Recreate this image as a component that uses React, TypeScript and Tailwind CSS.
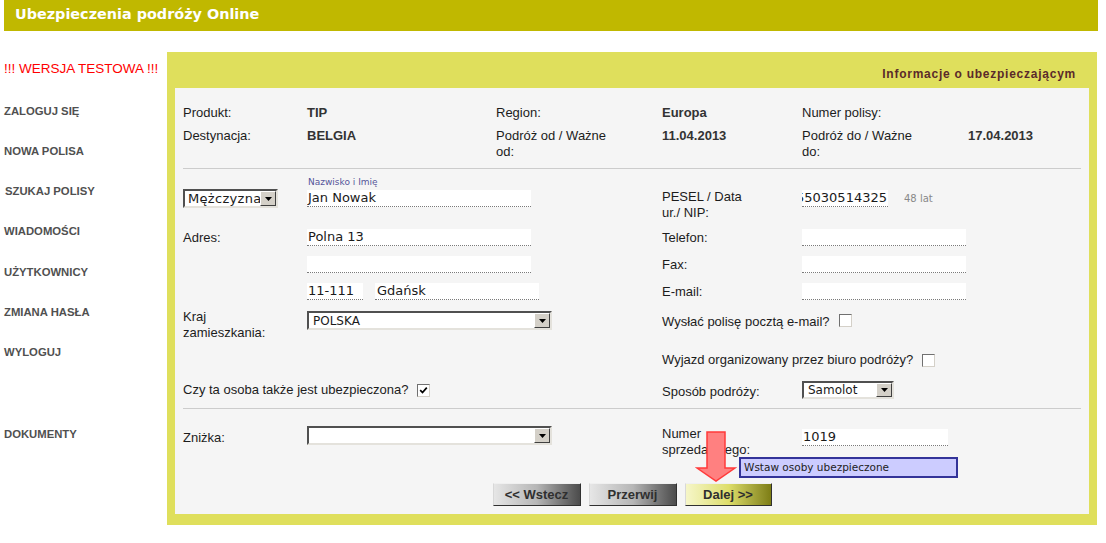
import React from "react";

const arial = "font-['Liberation_Sans',Arial,sans-serif]";
const verdana = "font-['DejaVu_Sans',Verdana,sans-serif]";

const nav = [
  { label: "ZALOGUJ SIĘ", pad: "" },
  { label: "NOWA POLISA", pad: "" },
  { label: "SZUKAJ POLISY", pad: "pl-[1px]" },
  { label: "WIADOMOŚCI", pad: "" },
  { label: "UŻYTKOWNICY", pad: "" },
  { label: "ZMIANA HASŁA", pad: "" },
  { label: "WYLOGUJ", pad: "" },
];

function DownArrow() {
  return (
    <svg width="7" height="4" viewBox="0 0 7 4">
      <path d="M0 0H7L3.5 4Z" fill="#000" />
    </svg>
  );
}

function Select({ value = "", className = "", textClass = "" }: { value?: string; className?: string; textClass?: string }) {
  return (
    <div
      className={`flex bg-white border-2 border-t-[#505050] border-l-[#505050] border-r-[#e4e2dc] border-b-[#e4e2dc] ${className}`}
    >
      <div className={`flex-1 flex items-center overflow-hidden whitespace-nowrap pl-[3px] text-[#1a1a1a] ${verdana} ${textClass}`}>
        {value}
      </div>
      <div className="w-[16px] flex items-center justify-center bg-[#d4d0c8] border border-t-white border-l-white border-r-[#404040] border-b-[#404040]">
        <DownArrow />
      </div>
    </div>
  );
}

function Input({ value = "", className = "", right = false }: { value?: string; className?: string; right?: boolean }) {
  return (
    <div
      className={`h-[17px] flex bg-white border-b border-dotted border-[#7a7a7a] px-[1px] text-[13px] leading-[16px] whitespace-nowrap overflow-hidden text-[#1a1a1a] ${verdana} ${
        right ? "justify-end" : ""
      } ${className}`}
    >
      {value}
    </div>
  );
}

function Check({ checked = false }: { checked?: boolean }) {
  return (
    <div className="w-[13px] h-[13px] shrink-0 bg-white border border-t-[#707070] border-l-[#707070] border-r-[#d4d0c8] border-b-[#d4d0c8] flex items-center justify-center">
      {checked && (
        <svg width="9" height="9" viewBox="0 0 9 9">
          <path d="M1.2 4.2 L3.5 6.6 L7.8 1.6" stroke="#000" strokeWidth="1.7" fill="none" />
        </svg>
      )}
    </div>
  );
}

function Button({ label, yellow = false }: { label: string; yellow?: boolean }) {
  return (
    <div
      className={`h-[23px] flex items-center justify-center text-[13px] font-bold text-[#2f2f2f] border border-t-[#f0f0f0] border-l-[#d8d8d8] border-r-[#303030] border-b-[#303030] ${arial} ${
        yellow
          ? "w-[87px] bg-linear-to-r from-[#f6f6c8] via-[#dede6a] to-[#7e7e14]"
          : "w-[88px] bg-linear-to-r from-[#e6e6e6] via-[#b6b6b6] to-[#4c4c4c]"
      }`}
    >
      {label}
    </div>
  );
}

export default function App() {
  return (
    <div className={`relative w-[1106px] h-[543px] bg-white overflow-hidden ${arial}`}>
      <div className="ml-[4px] w-[1094px] h-[31px] bg-[#c0b800] flex items-center pl-[11px] pb-[1px]">
        <span className={`text-white font-bold text-[14.4px] ${verdana}`}>Ubezpieczenia podróży Online</span>
      </div>

      <div className="flex ml-[4px] mt-[21px]">
        {/* sidebar */}
        <div className="w-[163px] pt-[10px]">
          <div className="text-[13.5px] leading-[14px] text-[#ff0000]">!!! WERSJA TESTOWA !!!</div>
          <div className="mt-[28.5px] flex flex-col">
            {nav.map((n) => (
              <div key={n.label} className={`h-[40.33px] text-[11.3px] leading-[13px] font-bold text-[#505050] ${n.pad}`}>
                {n.label}
              </div>
            ))}
            <div className="mt-[41.7px] text-[11.3px] leading-[13px] font-bold text-[#505050]">DOKUMENTY</div>
          </div>
        </div>

        {/* main panel */}
        <div className="w-[930px] bg-[#dfdf5c] pb-[11px]">
          <div className="h-[36px] flex justify-end pr-[21px] pt-[15px]">
            <span className="text-[12px] leading-[15px] font-bold text-[#5a2a2a] tracking-[0.75px]">Informacje o ubezpieczającym</span>
          </div>

          <div className="mx-[8px] bg-[#f5f5f5] px-[8px] pt-[17px] pb-[8px] text-[13px] leading-[16px] text-[#1c1c1c]">
            {/* policy info */}
            <div className="grid grid-cols-[124px_189px_166px_140px_166px_1fr] gap-y-[7px] items-start">
              <div>Produkt:</div>
              <div className="font-bold text-[#333]">TIP</div>
              <div>Region:</div>
              <div className="font-bold text-[#333]">Europa</div>
              <div>Numer polisy:</div>
              <div></div>

              <div>Destynacja:</div>
              <div className="font-bold text-[#333]">BELGIA</div>
              <div className="w-[120px]">Podróż od / Ważne od:</div>
              <div className="font-bold text-[#333]">11.04.2013</div>
              <div className="w-[120px]">Podróż do / Ważne do:</div>
              <div className="font-bold text-[#333]">17.04.2013</div>
            </div>

            <div className="mt-[8px] h-px bg-[#cccccc]" />

            {/* R1 */}
            <div className="grid grid-cols-[124px_355px_140px_1fr] h-[55px] items-start">
              <Select value="Mężczyzna" className="mt-[20px] w-[95px] h-[19px]" textClass="text-[13px] tracking-[0.3px]" />
              <div className="mt-[8px]">
                <div className={`text-[9px] leading-[11px] text-[#55559a] pl-[1px] ${verdana}`}>Nazwisko i Imię</div>
                <Input value="Jan Nowak" className="mt-[2px] w-[224px]" />
              </div>
              <div className="mt-[20px] w-[90px]">PESEL / Data ur./ NIP:</div>
              <div className="mt-[21px] flex items-center">
                <Input value="55030514325" right className="w-[86px] text-[12.6px]" />
                <span className={`ml-[16px] text-[10px] text-[#888] ${verdana}`}>48 lat</span>
              </div>
            </div>

            {/* R2 */}
            <div className="grid grid-cols-[124px_355px_140px_1fr] h-[27px] items-center">
              <div>Adres:</div>
              <Input value="Polna 13" className="w-[224px]" />
              <div>Telefon:</div>
              <Input className="w-[164px]" />
            </div>

            {/* R3 */}
            <div className="grid grid-cols-[124px_355px_140px_1fr] h-[27px] items-center">
              <div></div>
              <Input className="w-[224px]" />
              <div>Fax:</div>
              <Input className="w-[164px]" />
            </div>

            {/* R4 */}
            <div className="grid grid-cols-[124px_355px_140px_1fr] h-[27px] items-center">
              <div></div>
              <div className="flex gap-[12px]">
                <Input value="11-111" className="w-[56px]" />
                <Input value="Gdańsk" className="w-[164px] pl-[2px]" />
              </div>
              <div>E-mail:</div>
              <Input className="w-[164px]" />
            </div>

            {/* R5 */}
            <div className="grid grid-cols-[124px_355px_140px_1fr] h-[40px] items-start">
              <div className="mt-[4px] w-[100px]">Kraj zamieszkania:</div>
              <Select value="POLSKA" className="mt-[6px] w-[245px] h-[19px]" textClass="text-[12px] pl-[4px]" />
              <div className="col-span-2 mt-[6px] h-[19px] flex items-center">
                <span className="pt-[2px]">Wysłać polisę pocztą e-mail?</span>
                <div className="ml-[9px]">
                  <Check />
                </div>
              </div>
            </div>

            {/* R6 */}
            <div className="grid grid-cols-[124px_355px_140px_1fr] h-[30px] items-center">
              <div className="col-span-2"></div>
              <div className="col-span-2 flex items-center">
                <span>Wyjazd organizowany przez biuro podróży?</span>
                <div className="ml-[9px]">
                  <Check />
                </div>
              </div>
            </div>

            {/* R7 */}
            <div className="grid grid-cols-[124px_355px_140px_1fr] h-[30px] items-center">
              <div className="col-span-2 flex items-center">
                <span>Czy ta osoba także jest ubezpieczona?</span>
                <div className="ml-[9px]">
                  <Check checked />
                </div>
              </div>
              <div className="pt-[3px]">Sposób podróży:</div>
              <Select value="Samolot" className="w-[92px] h-[18px]" textClass="text-[12px] pl-[4px]" />
            </div>

            <div className="mt-[3px] h-px bg-[#cccccc]" />

            {/* R8 */}
            <div className="grid grid-cols-[124px_355px_140px_1fr] h-[49px] items-start">
              <div className="mt-[21px]">Zniżka:</div>
              <Select className="mt-[17px] w-[245px] h-[19px]" />
              <div className="mt-[17px] w-[94px]">Numer sprzedającego:</div>
              <Input value="1019" className="mt-[20px] w-[146px]" />
            </div>

            <div className="mt-[25px] flex justify-center gap-[8px]">
              <Button label="<< Wstecz" />
              <Button label="Przerwij" />
              <Button label="Dalej >>" yellow />
            </div>
          </div>
        </div>
      </div>

      {/* pointer arrow */}
      <svg className="absolute left-[695px] top-[430px]" width="42" height="53" viewBox="0 0 42 53">
        <path d="M12 2H30V38H40L21 51L2 38H12Z" fill="#ff8080" stroke="#ff3a3a" strokeWidth="1.5" />
      </svg>

      {/* tooltip */}
      <div
        className={`absolute left-[739px] top-[457px] w-[219px] h-[21px] bg-[#ccccff] border-2 border-[#333399] pl-[3px] flex items-center text-[10.5px] text-[#222] ${verdana}`}
      >
        Wstaw osoby ubezpieczone
      </div>
    </div>
  );
}
